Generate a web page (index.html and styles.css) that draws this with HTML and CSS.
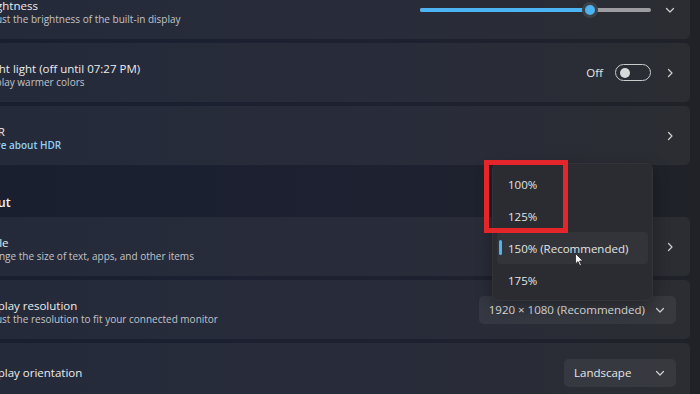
FILE: index.html
```html
<!DOCTYPE html>
<html lang="en">
<head>
    <meta charset="UTF-8">
    <meta name="viewport" content="width=device-width, initial-scale=1.0">
    <title>Display settings</title>
    <link rel="stylesheet" href="styles.css">
</head>
<body>

<div class="page">
    <div class="card">
        <span class="icon"></span>
        <div class="texts pair">
            <div class="title">Brightness</div>
            <div class="sub">Adjust the brightness of the built-in display</div>
        </div>
        <div class="controls">
            <div class="slider">
                <div class="fill"></div>
                <div class="thumb"></div>
            </div>
            <svg class="chev" width="10" height="10" viewBox="0 0 10 10"><polyline points="1.5,3.5 5,7 8.5,3.5"/></svg>
        </div>
    </div>

    <div class="card">
        <span class="icon"></span>
        <div class="texts pair">
            <div class="title">Night light (off until 07:27 PM)</div>
            <div class="sub">Display warmer colors</div>
        </div>
        <div class="controls">
            <span class="state">Off</span>
            <div class="toggle"><div class="knob"></div></div>
            <svg class="chev" width="10" height="10" viewBox="0 0 10 10"><polyline points="3.5,1.5 7,5 3.5,8.5"/></svg>
        </div>
    </div>

    <div class="card">
        <span class="icon"></span>
        <div class="texts pair">
            <div class="title">HDR</div>
            <div class="sub link">More about HDR</div>
        </div>
        <div class="controls">
            <svg class="chev" width="10" height="10" viewBox="0 0 10 10"><polyline points="3.5,1.5 7,5 3.5,8.5"/></svg>
        </div>
    </div>

    <h2 class="section">Scale &amp; layout</h2>

    <div class="card">
        <span class="icon"></span>
        <div class="texts pair">
            <div class="title">Scale</div>
            <div class="sub">Change the size of text, apps, and other items</div>
        </div>
        <div class="controls">
            <svg class="chev" width="10" height="10" viewBox="0 0 10 10"><polyline points="3.5,1.5 7,5 3.5,8.5"/></svg>
        </div>
    </div>

    <div class="card combo-card">
        <span class="icon"></span>
        <div class="texts pair">
            <div class="title">Display resolution</div>
            <div class="sub">Adjust the resolution to fit your connected monitor</div>
        </div>
        <div class="controls">
            <div class="combo">
                <span>1920 × 1080 (Recommended)</span>
                <svg class="chev" width="10" height="10" viewBox="0 0 10 10"><polyline points="1.5,3.5 5,7 8.5,3.5"/></svg>
            </div>
        </div>
    </div>

    <div class="card combo-card">
        <span class="icon"></span>
        <div class="texts">
            <div class="title">Display orientation</div>
        </div>
        <div class="controls">
            <div class="combo wide">
                <span>Landscape</span>
                <svg class="chev" width="10" height="10" viewBox="0 0 10 10"><polyline points="1.5,3.5 5,7 8.5,3.5"/></svg>
            </div>
        </div>
    </div>
</div>

<div class="menu">
    <div class="item">100%</div>
    <div class="item">125%</div>
    <div class="item selected">150% (Recommended)</div>
    <div class="item">175%</div>
</div>

<div class="highlight"></div>

<svg class="cursor" width="9" height="14" viewBox="0 0 9 14">
    <path d="M0.5 0.5 L0.5 11 L3 8.6 L4.8 12.8 L6.4 12.1 L4.6 8 L8 8 Z"/>
</svg>

</body>
</html>
```

FILE: styles.css
```css
body {
    margin: 0;
    height: 394px;
    overflow: hidden;
    font-family: "Open Sans", "Noto Sans", sans-serif;
    background: linear-gradient(90deg, #1a1f30 0%, #1d2130 55%, #202228 100%);
    color: #e8e8e8;
}

.page {
    margin: -20px 10px 0 -76px;
    display: flex;
    flex-direction: column;
    gap: 4px;
}

.card {
    height: 59px;
    display: flex;
    align-items: center;
    padding: 0 15px 0 16px;
    background-color: rgba(255, 255, 255, 0.05);
    border-radius: 5px;
}

.combo-card {
    padding-right: 14px;
}

.icon {
    width: 20px;
    height: 20px;
    margin-right: 21px;
    flex-shrink: 0;
}

.texts {
    display: flex;
    flex-direction: column;
    gap: 0;
}

.texts.pair {
    padding-top: 5px;
}

.title {
    font-size: 11.5px;
    line-height: 15px;
    color: #ececec;
}

.sub {
    font-size: 10px;
    line-height: 13px;
    color: #c2c4c8;
}

.sub.link {
    color: #8fd0f6;
    font-weight: 600;
}

.section {
    margin: 26px 0 2px 2px;
    font-size: 12.5px;
    line-height: 16px;
    font-weight: 600;
    color: #f2f2f2;
}

.controls {
    margin-left: auto;
    display: flex;
    align-items: center;
}

.chev {
    fill: none;
    stroke: #cfd0d2;
    stroke-width: 1.2;
    stroke-linecap: round;
    stroke-linejoin: round;
}

/* slider */
.slider {
    position: relative;
    width: 231px;
    height: 4px;
    border-radius: 2px;
    background-color: #9c9da0;
    margin-right: 14px;
}

.slider .fill {
    width: 170px;
    height: 4px;
    border-radius: 2px;
    background-color: #4cb4f2;
}

.slider .thumb {
    position: absolute;
    left: 162px;
    top: -6px;
    width: 10px;
    height: 10px;
    border-radius: 50%;
    background-color: #4cb4f2;
    border: 3px solid #3d4047;
}

/* toggle */
.state {
    font-size: 11.5px;
    color: #e6e6e6;
    margin-right: 12px;
}

.toggle {
    height: 15px;
    width: 26px;
    border: 1px solid #c9cacc;
    border-radius: 9px;
    display: flex;
    align-items: center;
    padding: 0 4px;
    margin-right: 14px;
}

.knob {
    width: 10px;
    height: 10px;
    border-radius: 50%;
    background-color: #d8d9db;
}

/* combo box */
.combo {
    height: 28px;
    display: flex;
    align-items: center;
    justify-content: space-between;
    gap: 10px;
    padding: 0 11px 0 10px;
    border-radius: 5px;
    background-color: rgba(255, 255, 255, 0.06);
    font-size: 11.5px;
    color: #e6e6e6;
}

.combo.wide {
    width: 91px;
}

/* open scale menu */
.menu {
    position: absolute;
    left: 492px;
    top: 163px;
    width: 151px;
    padding: 4px;
    background-color: #2b2c31;
    border: 1px solid rgba(255, 255, 255, 0.04);
    border-radius: 7px;
    box-shadow: 0 6px 16px rgba(0, 0, 0, 0.35);
}

.item {
    position: relative;
    height: 32px;
    display: flex;
    align-items: center;
    padding-left: 11px;
    font-size: 11.5px;
    color: #e4e4e4;
    border-radius: 4px;
}

.item.selected {
    background-color: #323439;
}

.item.selected::before {
    content: "";
    position: absolute;
    left: 2px;
    top: 8px;
    width: 3px;
    height: 15px;
    border-radius: 2px;
    background-color: #4cb4f2;
}

.highlight {
    position: absolute;
    left: 484px;
    top: 160px;
    width: 74px;
    height: 63px;
    border: 5px solid #e4262a;
}

.cursor {
    position: absolute;
    left: 575px;
    top: 253px;
    fill: #f4f4f4;
    stroke: #222;
    stroke-width: 0.8;
}
```
